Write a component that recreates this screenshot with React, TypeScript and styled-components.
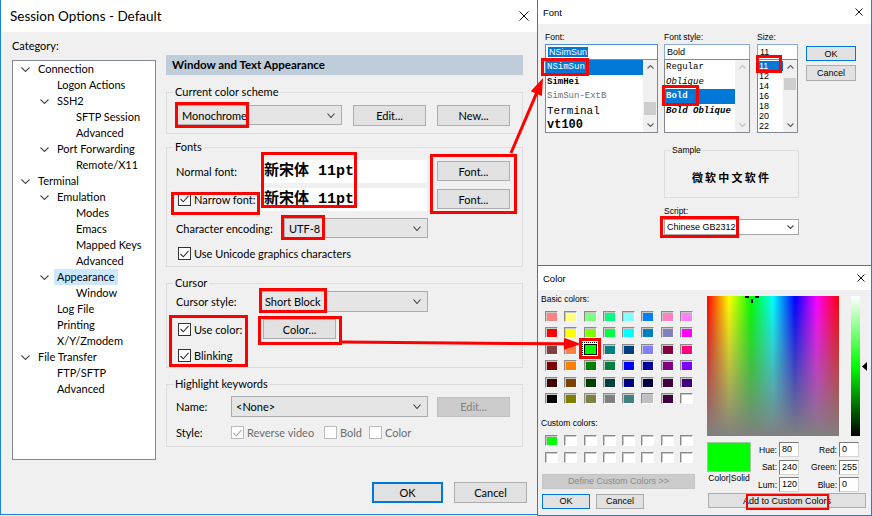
import React from "react";
import styled, { createGlobalStyle } from "styled-components";

const UI = `"Lato", "Noto Sans", sans-serif`;
const SMALL = `"Liberation Sans", Arial, sans-serif`;
const MONO = `"Liberation Mono", "Courier New", monospace`;
const CJK = `"Liberation Mono", "Noto Sans CJK SC", monospace`;
const ACCENT = "#1883d7";
const SELECT = "#0078d7";

const GlobalStyle = createGlobalStyle`
  html, body { margin: 0; padding: 0; background: #ffffff; }
  body { font-family: ${UI}; }
  * { box-sizing: border-box; }
`;

const Canvas = styled.div`
  position: relative;
  width: 872px;
  height: 516px;
  overflow: hidden;
  display: flex;
  background: #ffffff;
`;

/* ---------- shared bits ---------- */

const TitleBar = styled.div<{ $h: number; $size: number; $pl: number; $pr: number }>`
  flex-shrink: 0;
  height: ${(p) => p.$h}px;
  background: #ffffff;
  display: flex;
  align-items: center;
  justify-content: space-between;
  padding: 0 ${(p) => p.$pr}px 0 ${(p) => p.$pl}px;
  font-size: ${(p) => p.$size}px;
  color: #000;
`;

const CloseX = ({ s }: { s: number }) => (
  <svg width={s} height={s} viewBox={`0 0 ${s} ${s}`}>
    <path d={`M0.5 0.5L${s - 0.5} ${s - 0.5}M${s - 0.5} 0.5L0.5 ${s - 0.5}`} stroke="#111" strokeWidth="1" />
  </svg>
);

const Chevron = ({ w = 8, h = 5, color = "#404040", up = false }: { w?: number; h?: number; color?: string; up?: boolean }) => (
  <svg width={w} height={h} viewBox={`0 0 ${w} ${h}`}>
    <polyline
      points={up ? `0.5,${h - 0.5} ${w / 2},0.5 ${w - 0.5},${h - 0.5}` : `0.5,0.5 ${w / 2},${h - 0.5} ${w - 0.5},0.5`}
      fill="none"
      stroke={color}
      strokeWidth="1.1"
    />
  </svg>
);

const CheckMark = ({ color = "#333" }: { color?: string }) => (
  <svg width="9" height="8" viewBox="0 0 9 8">
    <polyline points="0.5,4 3.3,6.8 8.5,0.8" fill="none" stroke={color} strokeWidth="1.1" />
  </svg>
);

/* ---------- main window ---------- */

const MainWindow = styled.div`
  flex-shrink: 0;
  width: 537px;
  height: 515px;
  border-left: 1px solid ${ACCENT};
  border-bottom: 1px solid ${ACCENT};
  background: #f0f0f0;
  display: flex;
  flex-direction: column;
  font-family: ${UI};
  font-size: 11px;
  color: #000;
`;

const MainBody = styled.div`
  display: grid;
  grid-template-columns: 144px 357px;
  column-gap: 10px;
  padding: 6px 0 0 11px;
  align-items: start;
`;

const CategoryCol = styled.div`
  display: flex;
  flex-direction: column;
`;

const CategoryLabel = styled.div`
  line-height: 16px;
  height: 16px;
  margin-bottom: 6px;
`;

const Tree = styled.div`
  height: 400px;
  background: #ffffff;
  border: 1px solid #828790;
`;

const TreeRow = styled.div<{ $level: number }>`
  height: 16px;
  display: flex;
  align-items: center;
  padding-left: ${(p) => 8 + p.$level * 19}px;
  white-space: nowrap;
`;

const TreeToggle = styled.span`
  width: 17px;
  flex-shrink: 0;
  display: flex;
  align-items: center;
`;

const TreeText = styled.span<{ $sel?: boolean }>`
  line-height: 16px;
  padding: 0 3px;
  margin-left: -3px;
  background: ${(p) => (p.$sel ? "#cce8ff" : "transparent")};
`;

const Panel = styled.div`
  padding-top: 17px;
  display: flex;
  flex-direction: column;
`;

const PanelHeader = styled.div`
  height: 20px;
  line-height: 20px;
  background: #bfcddb;
  padding-left: 6px;
  font-weight: 700;
  font-size: 11.5px;
`;

const Group = styled.fieldset<{ $mt: number; $pt: number; $pb: number }>`
  margin: ${(p) => p.$mt}px 0 0 0;
  padding: ${(p) => p.$pt}px 12px ${(p) => p.$pb}px 9px;
  border: 1px solid #dcdcdc;
  min-width: 0;
`;

const Legend = styled.legend`
  padding: 0 2px;
  margin-left: -3px;
  line-height: 16px;
  font-size: 11px;
`;

const Row = styled.div<{ $h: number; $mt?: number }>`
  display: flex;
  align-items: center;
  height: ${(p) => p.$h}px;
  margin-top: ${(p) => p.$mt ?? 0}px;
  white-space: nowrap;
`;

const FieldLabel = styled.span<{ $w: number }>`
  width: ${(p) => p.$w}px;
  flex-shrink: 0;
  white-space: nowrap;
`;

const Combo = styled.div<{ $w: number; $h: number; $ml?: number }>`
  width: ${(p) => p.$w}px;
  height: ${(p) => p.$h}px;
  margin-left: ${(p) => p.$ml ?? 0}px;
  flex-shrink: 0;
  background: #e5e5e5;
  border: 1px solid #acacac;
  display: flex;
  align-items: center;
  justify-content: space-between;
  padding: 0 6px 0 4px;
`;

const Btn = styled.div<{ $w: number; $h: number; $ml?: number; $default?: boolean; $disabled?: boolean }>`
  width: ${(p) => p.$w}px;
  height: ${(p) => p.$h}px;
  margin-left: ${(p) => p.$ml ?? 0}px;
  flex-shrink: 0;
  display: flex;
  align-items: center;
  justify-content: center;
  background: ${(p) => (p.$disabled ? "#cccccc" : "#e1e1e1")};
  border: 1px solid ${(p) => (p.$default ? SELECT : p.$disabled ? "#bfbfbf" : "#adadad")};
  box-shadow: ${(p) => (p.$default ? `inset 0 0 0 1px ${SELECT}` : "none")};
  color: ${(p) => (p.$disabled ? "#838383" : "#000")};
`;

const CheckBox = styled.span<{ $disabled?: boolean; $ml?: number }>`
  width: 13px;
  height: 13px;
  flex-shrink: 0;
  margin-left: ${(p) => p.$ml ?? 0}px;
  border: 1px solid ${(p) => (p.$disabled ? "#bcbcbc" : "#333")};
  background: #ffffff;
  display: inline-flex;
  align-items: center;
  justify-content: center;
`;

const CheckText = styled.span<{ $disabled?: boolean; $w?: number }>`
  margin-left: 3px;
  color: ${(p) => (p.$disabled ? "#6d6d6d" : "#000")};
  width: ${(p) => (p.$w ? `${p.$w}px` : "auto")};
  flex-shrink: 0;
`;

const CheckGroup = styled.span<{ $w: number }>`
  display: flex;
  align-items: center;
  width: ${(p) => p.$w}px;
  flex-shrink: 0;
`;

const FontField = styled.div`
  width: 167px;
  height: 23px;
  flex-shrink: 0;
  background: #ffffff;
  padding-left: 4px;
  font-family: ${CJK};
  font-weight: 700;
  font-size: 15px;
  line-height: 23px;
  white-space: nowrap;
`;

const Footer = styled.div`
  display: flex;
  justify-content: flex-end;
  gap: 11px;
  margin-top: 22px;
  padding-right: 10px;
`;

/* ---------- Font dialog ---------- */

const RightCol = styled.div`
  width: 335px;
  flex-shrink: 0;
  display: flex;
  flex-direction: column;
`;

const SmallWindow = styled.div<{ $h: number }>`
  height: ${(p) => p.$h}px;
  flex-shrink: 0;
  border: 1px solid ${ACCENT};
  border-top: none;
  background: #f0f0f0;
  display: flex;
  flex-direction: column;
  font-family: ${SMALL};
  font-size: 8.5px;
  color: #000;
`;

const FontBody = styled.div`
  padding: 8px 0 0 7px;
  display: flex;
  flex-direction: column;
`;

const FontTop = styled.div`
  display: flex;
  align-items: flex-start;
`;

const FontCol = styled.div<{ $w: number; $ml?: number }>`
  width: ${(p) => p.$w}px;
  margin-left: ${(p) => p.$ml ?? 0}px;
  display: flex;
  flex-direction: column;
`;

const SmallLabel = styled.div<{ $h?: number }>`
  height: ${(p) => p.$h ?? 12}px;
  line-height: 10px;
  white-space: nowrap;
`;

const TextInput = styled.div<{ $focus?: boolean }>`
  height: 16px;
  background: #ffffff;
  border: 1px solid ${(p) => (p.$focus ? "#4d8fd6" : "#8aaad0")};
  padding-left: 2px;
  font-size: 9px;
  line-height: 14px;
  white-space: nowrap;
  overflow: hidden;
`;

const InputSel = styled.span`
  background: ${SELECT};
  color: #ffffff;
  padding: 0 1px;
`;

const ListBox = styled.div`
  margin-top: -1px;
  height: 74px;
  border: 1px solid #828790;
  background: #ffffff;
  display: flex;
`;

const ListItems = styled.div<{ $pt?: number }>`
  flex: 1;
  min-width: 0;
  overflow: hidden;
  padding-top: ${(p) => p.$pt ?? 0}px;
`;

const ListItem = styled.div<{
  $h: number;
  $sel?: boolean;
  $mono?: boolean;
  $size?: number;
  $bold?: boolean;
  $italic?: boolean;
  $gray?: boolean;
}>`
  height: ${(p) => p.$h}px;
  line-height: ${(p) => p.$h}px;
  padding-left: 1px;
  white-space: nowrap;
  overflow: hidden;
  font-family: ${(p) => (p.$mono ? MONO : SMALL)};
  font-size: ${(p) => p.$size ?? 9}px;
  font-weight: ${(p) => (p.$bold ? 700 : 400)};
  font-style: ${(p) => (p.$italic ? "italic" : "normal")};
  background: ${(p) => (p.$sel ? SELECT : "transparent")};
  color: ${(p) => (p.$sel ? "#ffffff" : p.$gray ? "#6d6d6d" : "#000")};
`;

const ScrollBar = styled.div`
  width: 14px;
  flex-shrink: 0;
  background: #f0f0f0;
  display: flex;
  flex-direction: column;
`;

const ScrollArrow = styled.div`
  height: 14px;
  flex-shrink: 0;
  display: flex;
  align-items: center;
  justify-content: center;
`;

const ScrollTrack = styled.div`
  flex: 1;
  padding: 0 1px;
`;

const ScrollThumb = styled.div<{ $top: number; $h: number }>`
  margin-top: ${(p) => p.$top}px;
  height: ${(p) => p.$h}px;
  background: #cdcdcd;
`;

const SmallBtn = styled.div<{ $w: number; $h: number; $mt?: number; $ml?: number; $default?: boolean; $disabled?: boolean }>`
  width: ${(p) => p.$w}px;
  height: ${(p) => p.$h}px;
  margin-top: ${(p) => p.$mt ?? 0}px;
  margin-left: ${(p) => p.$ml ?? 0}px;
  flex-shrink: 0;
  display: flex;
  align-items: center;
  justify-content: center;
  background: ${(p) => (p.$disabled ? "#cccccc" : "#e1e1e1")};
  border: 1px solid ${(p) => (p.$default ? SELECT : p.$disabled ? "#c4c4c4" : "#adadad")};
  color: ${(p) => (p.$disabled ? "#8a8a8a" : "#000")};
  font-size: 9px;
  white-space: nowrap;
`;

const ButtonCol = styled.div`
  margin-left: 8px;
  padding-top: 14px;
  display: flex;
  flex-direction: column;
`;

const SampleGroup = styled.fieldset`
  margin: 12px 0 0 119px;
  width: 135px;
  padding: 15px 0 13px 0;
  border: 1px solid #dcdcdc;
  min-width: 0;
`;

const SampleLegend = styled.legend`
  margin-left: 6px;
  padding: 0 1px;
  line-height: 10px;
  font-size: 8.5px;
`;

const SampleText = styled.div`
  text-align: center;
  font-family: "Noto Sans CJK SC", sans-serif;
  font-weight: 700;
  font-size: 11px;
  line-height: 14px;
  letter-spacing: 2.2px;
`;

const ScriptBlock = styled.div`
  margin: 8px 0 0 119px;
  width: 135px;
  display: flex;
  flex-direction: column;
`;

const ScriptCombo = styled.div`
  margin-top: 3px;
  height: 16px;
  background: #ffffff;
  border: 1px solid #a6a6a6;
  display: flex;
  align-items: center;
  justify-content: space-between;
  padding: 0 4px 0 2px;
  font-size: 9px;
`;

/* ---------- Color dialog ---------- */

const ColorBody = styled.div`
  display: flex;
  padding: 4px 0 0 3px;
`;

const ColorLeft = styled.div`
  width: 166px;
  flex-shrink: 0;
  display: flex;
  flex-direction: column;
`;

const SwatchGrid = styled.div<{ $mt: number; $rg: number }>`
  display: grid;
  grid-template-columns: repeat(8, 13px);
  grid-auto-rows: 11px;
  column-gap: 6.3px;
  row-gap: ${(p) => p.$rg}px;
  margin: ${(p) => p.$mt}px 0 0 4px;
`;

const Swatch = styled.div<{ $c: string; $sel?: boolean }>`
  background: ${(p) => p.$c};
  border: 1px solid;
  border-color: ${(p) => (p.$sel ? "#000 #000 #000 #000" : "#8a8a8a #ffffff #ffffff #8a8a8a")};
  box-shadow: ${(p) => (p.$sel ? "0 0 0 1px #ffffff" : "inset 1px 1px 0 #c8c8c8")};
  outline: ${(p) => (p.$sel ? "1px dotted #000" : "none")};
  outline-offset: 1px;
`;

const ColorRight = styled.div`
  padding-top: 2px;
  display: flex;
  flex-direction: column;
`;

const SpectrumRow = styled.div`
  display: flex;
  align-items: flex-start;
`;

const Spectrum = styled.div`
  position: relative;
  width: 132px;
  height: 140px;
  background: linear-gradient(to bottom, rgba(128, 128, 128, 0), #808080),
    linear-gradient(to right, #ff0000, #ffff00 16.67%, #00ff00 33.33%, #00ffff 50%, #0000ff 66.67%, #ff00ff 83.33%, #ff0000);
`;

const Crosshair = styled.svg`
  position: absolute;
  left: 37px;
  top: -2px;
`;

const LumBar = styled.div`
  margin-left: 12px;
  width: 9px;
  height: 140px;
  background: linear-gradient(to bottom, #ffffff 0%, #00ff00 50%, #000000 100%);
`;

const LumArrowCol = styled.div`
  margin-left: 2px;
  padding-top: 66px;
`;

const ColorBottom = styled.div`
  margin-top: 6px;
  display: flex;
`;

const PreviewCol = styled.div`
  width: 44px;
  display: flex;
  flex-direction: column;
`;

const Preview = styled.div`
  height: 30px;
  background: #00ff00;
  border: 1px solid #9ec99e;
`;

const PreviewCaption = styled.div`
  margin-top: 1px;
  line-height: 10px;
  text-align: center;
  white-space: nowrap;
`;

const FieldCol = styled.div`
  display: flex;
  flex-direction: column;
  gap: 2.5px;
`;

const FieldRow = styled.div`
  display: flex;
  align-items: center;
  height: 15px;
`;

const FieldName = styled.span<{ $w: number }>`
  width: ${(p) => p.$w}px;
  text-align: right;
  margin-right: 2px;
  white-space: nowrap;
`;

const NumBox = styled.div`
  width: 20px;
  height: 15px;
  background: #ffffff;
  border: 1px solid;
  border-color: #7a7a7a #d4d4d4 #d4d4d4 #7a7a7a;
  padding-left: 2px;
  line-height: 13px;
  font-size: 9px;
`;

const BtnRow = styled.div`
  display: flex;
  margin-top: 5px;
  margin-left: 1px;
  gap: 6px;
`;

/* ---------- annotations ---------- */

const Overlay = styled.svg`
  position: absolute;
  left: 0;
  top: 0;
  pointer-events: none;
`;

const RED = "#ff0000";

const boxes: [number, number, number, number, number?][] = [
  [176.5, 103.5, 71, 23],
  [262.5, 153.5, 93, 53],
  [431.5, 155.5, 84, 57],
  [172.5, 193.5, 86, 20],
  [282.5, 216.5, 41, 22],
  [260.5, 289.5, 65, 22],
  [170.5, 316.5, 76, 49],
  [259.5, 317.5, 81, 26],
  [542.5, 59.5, 45, 15],
  [663.5, 86.5, 34, 18],
  [757.5, 56.5, 23, 15],
  [661.5, 217.5, 76, 19],
  [580.5, 339.5, 19, 18],
  [747, 495, 81, 14, 2],
];

function Arrow({ x1, y1, x2, y2, len = 16, w = 12 }: { x1: number; y1: number; x2: number; y2: number; len?: number; w?: number }) {
  const dx = x2 - x1;
  const dy = y2 - y1;
  const d = Math.hypot(dx, dy);
  const ux = dx / d;
  const uy = dy / d;
  const bx = x2 - ux * len;
  const by = y2 - uy * len;
  const px = -uy * (w / 2);
  const py = ux * (w / 2);
  return (
    <g>
      <line x1={x1} y1={y1} x2={bx + ux * 2} y2={by + uy * 2} stroke={RED} strokeWidth="3" />
      <polygon points={`${x2},${y2} ${bx + px},${by + py} ${bx - px},${by - py}`} fill={RED} />
    </g>
  );
}

/* ---------- data ---------- */

type Node = { t: string; l: number; c?: boolean; s?: boolean };
const tree: Node[] = [
  { t: "Connection", l: 0, c: true },
  { t: "Logon Actions", l: 1 },
  { t: "SSH2", l: 1, c: true },
  { t: "SFTP Session", l: 2 },
  { t: "Advanced", l: 2 },
  { t: "Port Forwarding", l: 1, c: true },
  { t: "Remote/X11", l: 2 },
  { t: "Terminal", l: 0, c: true },
  { t: "Emulation", l: 1, c: true },
  { t: "Modes", l: 2 },
  { t: "Emacs", l: 2 },
  { t: "Mapped Keys", l: 2 },
  { t: "Advanced", l: 2 },
  { t: "Appearance", l: 1, c: true, s: true },
  { t: "Window", l: 2 },
  { t: "Log File", l: 1 },
  { t: "Printing", l: 1 },
  { t: "X/Y/Zmodem", l: 1 },
  { t: "File Transfer", l: 0, c: true },
  { t: "FTP/SFTP", l: 1 },
  { t: "Advanced", l: 1 },
];

const basic = [
  "#ff8080", "#ffff80", "#80ff80", "#00ff80", "#80ffff", "#0080ff", "#ff80c0", "#ff80ff",
  "#ff0000", "#ffff00", "#80ff00", "#00ff40", "#00ffff", "#0080c0", "#8080c0", "#ff00ff",
  "#804040", "#ff8040", "#00ff00", "#008080", "#004080", "#8080ff", "#800040", "#ff0080",
  "#800000", "#ff8000", "#008000", "#008040", "#0000ff", "#0000a0", "#800080", "#8000ff",
  "#400000", "#804000", "#004000", "#004040", "#000080", "#000040", "#400040", "#400080",
  "#000000", "#808000", "#808040", "#808080", "#408080", "#c0c0c0", "#400040", "#ffffff",
];

const custom = ["#00ff00", ...Array(15).fill("#ffffff")];

const sizes = ["11", "12", "14", "16", "18", "20", "22"];

export default function App() {
  return (
    <>
      <GlobalStyle />
      <Canvas>
        <MainWindow>
          <TitleBar $h={32} $size={13.5} $pl={9} $pr={8}>
            <span>Session Options - Default</span>
            <CloseX s={10} />
          </TitleBar>
          <MainBody>
            <CategoryCol>
              <CategoryLabel>Category:</CategoryLabel>
              <Tree>
                {tree.map((n, i) => (
                  <TreeRow key={i} $level={n.l}>
                    <TreeToggle>{n.c && <Chevron w={9} h={5} color="#4a4a4a" />}</TreeToggle>
                    <TreeText $sel={n.s}>{n.t}</TreeText>
                  </TreeRow>
                ))}
              </Tree>
            </CategoryCol>

            <Panel>
              <PanelHeader>Window and Text Appearance</PanelHeader>

              <Group $mt={9} $pt={4} $pb={7}>
                <Legend>Current color scheme</Legend>
                <Row $h={22}>
                  <Combo $w={165} $h={20} $ml={1}>
                    <span>Monochrome</span>
                    <Chevron />
                  </Combo>
                  <Btn $w={73} $h={21} $ml={11}>Edit...</Btn>
                  <Btn $w={73} $h={21} $ml={11}>New...</Btn>
                </Row>
              </Group>

              <Group $mt={5} $pt={4} $pb={6}>
                <Legend>Fonts</Legend>
                <Row $h={24}>
                  <FieldLabel $w={84}>Normal font:</FieldLabel>
                  <FontField>新宋体 11pt</FontField>
                  <Btn $w={73} $h={20} $ml={10}>Font...</Btn>
                </Row>
                <Row $h={24} $mt={4}>
                  <CheckGroup $w={84}>
                    <CheckBox $ml={2}><CheckMark /></CheckBox>
                    <CheckText>Narrow font:</CheckText>
                  </CheckGroup>
                  <FontField>新宋体 11pt</FontField>
                  <Btn $w={73} $h={20} $ml={10}>Font...</Btn>
                </Row>
                <Row $h={20} $mt={7}>
                  <FieldLabel $w={108}>Character encoding:</FieldLabel>
                  <Combo $w={144} $h={20}>
                    <span>UTF-8</span>
                    <Chevron />
                  </Combo>
                </Row>
                <Row $h={13} $mt={9}>
                  <CheckBox $ml={2}><CheckMark /></CheckBox>
                  <CheckText>Use Unicode graphics characters</CheckText>
                </Row>
              </Group>

              <Group $mt={8} $pt={0} $pb={5}>
                <Legend>Cursor</Legend>
                <Row $h={21}>
                  <FieldLabel $w={84}>Cursor style:</FieldLabel>
                  <Combo $w={168} $h={21}>
                    <span>Short Block</span>
                    <Chevron />
                  </Combo>
                </Row>
                <Row $h={20} $mt={7}>
                  <CheckGroup $w={87}>
                    <CheckBox $ml={2}><CheckMark /></CheckBox>
                    <CheckText>Use color:</CheckText>
                  </CheckGroup>
                  <Btn $w={73} $h={20}>Color...</Btn>
                </Row>
                <Row $h={13} $mt={10}>
                  <CheckBox $ml={2}><CheckMark /></CheckBox>
                  <CheckText>Blinking</CheckText>
                </Row>
              </Group>

              <Group $mt={8} $pt={4} $pb={7}>
                <Legend>Highlight keywords</Legend>
                <Row $h={21}>
                  <FieldLabel $w={55}>Name:</FieldLabel>
                  <Combo $w={197} $h={21}>
                    <span>&lt;None&gt;</span>
                    <Chevron />
                  </Combo>
                  <Btn $w={73} $h={20} $ml={9} $disabled>Edit...</Btn>
                </Row>
                <Row $h={13} $mt={9}>
                  <FieldLabel $w={55}>Style:</FieldLabel>
                  <CheckGroup $w={93}>
                    <CheckBox $disabled><CheckMark color="#a8a8a8" /></CheckBox>
                    <CheckText $disabled>Reverse video</CheckText>
                  </CheckGroup>
                  <CheckGroup $w={45}>
                    <CheckBox $disabled />
                    <CheckText $disabled>Bold</CheckText>
                  </CheckGroup>
                  <CheckGroup $w={60}>
                    <CheckBox $disabled />
                    <CheckText $disabled>Color</CheckText>
                  </CheckGroup>
                </Row>
              </Group>
            </Panel>
          </MainBody>
          <Footer>
            <Btn $w={71} $h={21} $default>OK</Btn>
            <Btn $w={73} $h={21}>Cancel</Btn>
          </Footer>
        </MainWindow>

        <RightCol>
          <SmallWindow $h={266}>
            <TitleBar $h={24} $size={9.5} $pl={5} $pr={8}>
              <span>Font</span>
              <CloseX s={8} />
            </TitleBar>
            <FontBody>
              <FontTop>
                <FontCol $w={113}>
                  <SmallLabel>Font:</SmallLabel>
                  <TextInput $focus><InputSel>NSimSun</InputSel></TextInput>
                  <ListBox>
                    <ListItems>
                      <ListItem $h={14.5} $mono $sel>NSimSun</ListItem>
                      <ListItem $h={14.5} $mono $bold>SimHei</ListItem>
                      <ListItem $h={14.5} $mono $gray>SimSun-ExtB</ListItem>
                      <ListItem $h={14.5} $mono $size={11}>Terminal</ListItem>
                      <ListItem $h={14.5} $mono $size={12} $bold>vt100</ListItem>
                    </ListItems>
                    <ScrollBar>
                      <ScrollArrow><Chevron w={7} h={4} up color="#606060" /></ScrollArrow>
                      <ScrollTrack><ScrollThumb $top={28} $h={13} /></ScrollTrack>
                      <ScrollArrow><Chevron w={7} h={4} color="#606060" /></ScrollArrow>
                    </ScrollBar>
                  </ListBox>
                </FontCol>

                <FontCol $w={86} $ml={6}>
                  <SmallLabel>Font style:</SmallLabel>
                  <TextInput>Bold</TextInput>
                  <ListBox>
                    <ListItems>
                      <ListItem $h={14.5} $mono>Regular</ListItem>
                      <ListItem $h={14.5} $mono $italic>Oblique</ListItem>
                      <ListItem $h={14.5} $mono $bold $sel>Bold</ListItem>
                      <ListItem $h={14.5} $mono $bold $italic>Bold Oblique</ListItem>
                    </ListItems>
                    <ScrollBar>
                      <ScrollArrow><Chevron w={7} h={4} up color="#c2c2c2" /></ScrollArrow>
                      <ScrollTrack />
                      <ScrollArrow><Chevron w={7} h={4} color="#c2c2c2" /></ScrollArrow>
                    </ScrollBar>
                  </ListBox>
                </FontCol>

                <FontCol $w={41} $ml={7}>
                  <SmallLabel>Size:</SmallLabel>
                  <TextInput>11</TextInput>
                  <ListBox>
                    <ListItems $pt={1}>
                      {sizes.map((s, i) => (
                        <ListItem key={s} $h={10} $sel={i === 0} $size={9}>{s}</ListItem>
                      ))}
                    </ListItems>
                    <ScrollBar>
                      <ScrollArrow><Chevron w={7} h={4} up color="#606060" /></ScrollArrow>
                      <ScrollTrack><ScrollThumb $top={4} $h={12} /></ScrollTrack>
                      <ScrollArrow><Chevron w={7} h={4} color="#606060" /></ScrollArrow>
                    </ScrollBar>
                  </ListBox>
                </FontCol>

                <ButtonCol>
                  <SmallBtn $w={50} $h={15} $default>OK</SmallBtn>
                  <SmallBtn $w={50} $h={16} $mt={4}>Cancel</SmallBtn>
                </ButtonCol>
              </FontTop>

              <SampleGroup>
                <SampleLegend>Sample</SampleLegend>
                <SampleText>微软中文软件</SampleText>
              </SampleGroup>

              <ScriptBlock>
                <SmallLabel $h={10}>Script:</SmallLabel>
                <ScriptCombo>
                  <span>Chinese GB2312</span>
                  <Chevron w={7} h={4} color="#505050" />
                </ScriptCombo>
              </ScriptBlock>
            </FontBody>
          </SmallWindow>

          <SmallWindow $h={250}>
            <TitleBar $h={24} $size={9.5} $pl={5} $pr={6}>
              <span>Color</span>
              <CloseX s={8} />
            </TitleBar>
            <ColorBody>
              <ColorLeft>
                <SmallLabel $h={10}>Basic colors:</SmallLabel>
                <SwatchGrid $mt={7} $rg={5.4}>
                  {basic.map((c, i) => (
                    <Swatch key={i} $c={c} $sel={i === 18} />
                  ))}
                </SwatchGrid>
                <SmallLabel $h={10} style={{ marginTop: 14 }}>Custom colors:</SmallLabel>
                <SwatchGrid $mt={7} $rg={6}>
                  {custom.map((c, i) => (
                    <Swatch key={i} $c={c} />
                  ))}
                </SwatchGrid>
                <SmallBtn $w={153} $h={15} $mt={11} $ml={1} $disabled>Define Custom Colors &gt;&gt;</SmallBtn>
                <BtnRow>
                  <SmallBtn $w={48} $h={15} $default>OK</SmallBtn>
                  <SmallBtn $w={48} $h={15}>Cancel</SmallBtn>
                </BtnRow>
              </ColorLeft>

              <ColorRight>
                <SpectrumRow>
                  <Spectrum>
                    <Crosshair width="16" height="10" viewBox="0 0 16 10">
                      <rect x="1" y="2" width="4" height="2" fill="#000" />
                      <rect x="11" y="2" width="4" height="2" fill="#000" />
                      <rect x="7" y="5" width="2" height="4" fill="#000" />
                    </Crosshair>
                  </Spectrum>
                  <LumBar />
                  <LumArrowCol>
                    <svg width="5" height="9" viewBox="0 0 5 9">
                      <polygon points="0,4.5 5,0 5,9" fill="#000" />
                    </svg>
                  </LumArrowCol>
                </SpectrumRow>
                <ColorBottom>
                  <PreviewCol>
                    <Preview />
                    <PreviewCaption>Color|Solid</PreviewCaption>
                  </PreviewCol>
                  <FieldCol>
                    <FieldRow><FieldName $w={26}>Hue:</FieldName><NumBox>80</NumBox></FieldRow>
                    <FieldRow><FieldName $w={26}>Sat:</FieldName><NumBox>240</NumBox></FieldRow>
                    <FieldRow><FieldName $w={26}>Lum:</FieldName><NumBox>120</NumBox></FieldRow>
                  </FieldCol>
                  <FieldCol>
                    <FieldRow><FieldName $w={38}>Red:</FieldName><NumBox>0</NumBox></FieldRow>
                    <FieldRow><FieldName $w={38}>Green:</FieldName><NumBox>255</NumBox></FieldRow>
                    <FieldRow><FieldName $w={38}>Blue:</FieldName><NumBox>0</NumBox></FieldRow>
                  </FieldCol>
                </ColorBottom>
                <SmallBtn $w={158} $h={15} $mt={1} $ml={1}>Add to Custom Colors</SmallBtn>
              </ColorRight>
            </ColorBody>
          </SmallWindow>
        </RightCol>

        <Overlay width={872} height={516} viewBox="0 0 872 516">
          {boxes.map(([x, y, w, h, sw], i) => (
            <rect key={i} x={x} y={y} width={w} height={h} fill="none" stroke={RED} strokeWidth={sw ?? 3} />
          ))}
          <Arrow x1={511} y1={153} x2={543} y2={78} len={17} w={12} />
          <Arrow x1={342} y1={342} x2={581} y2={344} len={17} w={12} />
        </Overlay>
      </Canvas>
    </>
  );
}
